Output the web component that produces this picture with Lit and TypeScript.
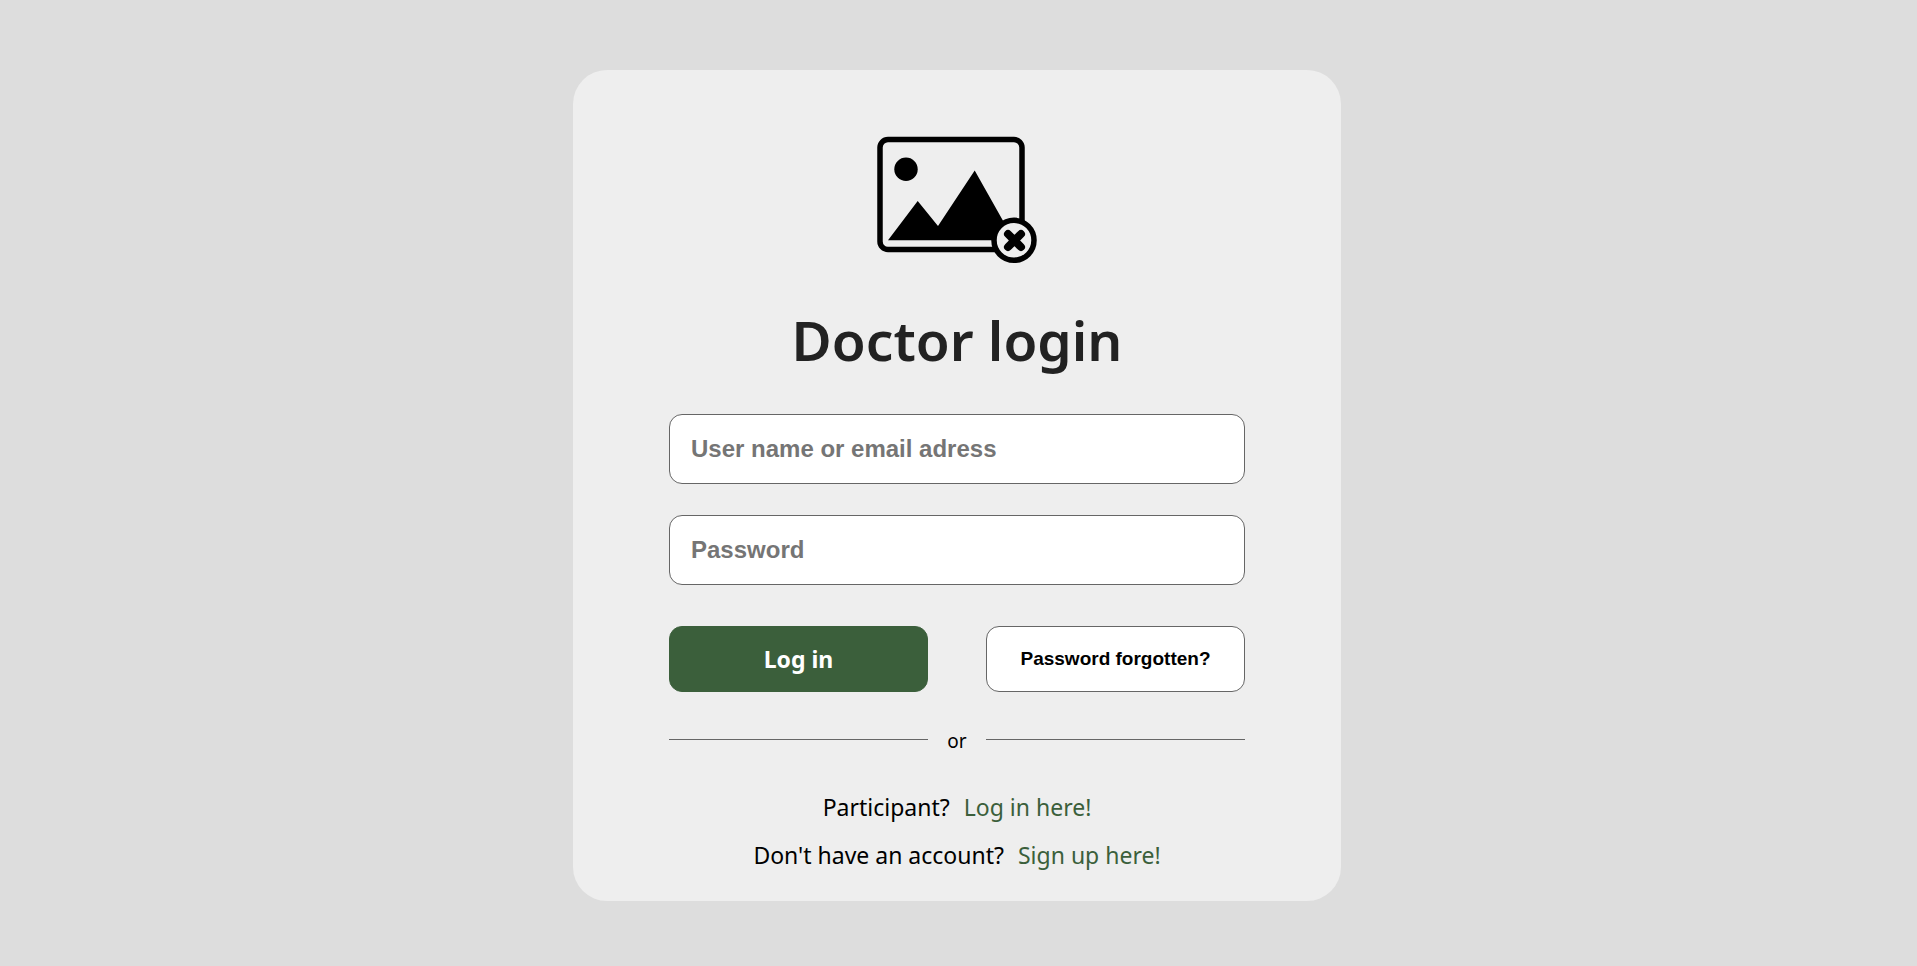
import { LitElement, html, css } from "lit";
import { customElement } from "lit/decorators.js";

@customElement("app-root")
export class AppRoot extends LitElement {
  static styles = css`
    :host {
      display: flex;
      justify-content: center;
      align-items: flex-start;
      box-sizing: border-box;
      min-height: 100vh;
      padding: 70px 3px 64px 0;
      background: #dddddd;
      color: #000;
      font-family: "Noto Sans", sans-serif;
    }
    .card {
      display: flex;
      flex-direction: column;
      box-sizing: border-box;
      width: 768px;
      max-width: 100%;
      padding: 66px 96px 22px;
      border-radius: 34px;
      background: #eeeeee;
    }
    .logo {
      align-self: center;
      width: 160px;
      height: 128px;
    }
    h1 {
      margin: 36px 0 34px;
      font-size: 55px;
      line-height: 80px;
      font-weight: 600;
      text-align: center;
      color: #222;
    }
    form {
      display: flex;
      flex-direction: column;
    }
    .field {
      box-sizing: border-box;
      width: 100%;
      height: 70px;
      margin: 0 0 31px;
      padding: 0 21px;
      border: 1px solid #666;
      border-radius: 13px;
      background: #fff;
      font: bold 24px "Liberation Sans", Arial, sans-serif;
    }
    .field::placeholder {
      color: #757575;
      opacity: 1;
    }
    .pair {
      display: grid;
      grid-template-columns: 1fr 1fr;
      column-gap: 58px;
      margin-top: 10px;
    }
    button {
      height: 66px;
      padding: 0;
      border: 1px solid #666;
      border-radius: 13px;
      background: #fff;
      color: #000;
      font: bold 19px "Liberation Sans", Arial, sans-serif;
      cursor: pointer;
    }
    .primary {
      border-color: #3b5f3b;
      background: #3b5f3b;
      color: #fff;
      font: bold 23px "Noto Sans", sans-serif;
    }
    .divider {
      display: grid;
      grid-template-columns: 1fr 58px 1fr;
      align-items: start;
      margin: 34px 0 27px;
      font-size: 19px;
      line-height: 30px;
      text-align: center;
    }
    .rule {
      height: 1px;
      margin-top: 13px;
      background: #666;
    }
    .line {
      display: flex;
      justify-content: center;
      gap: 14px;
      margin: 0;
      font-size: 23px;
      line-height: 48px;
    }
    a {
      color: #3b5f3b;
      text-decoration: none;
    }
  `;

  render() {
    return html`
      <main class="card">
        <svg class="logo" viewBox="0 0 160 128" role="img" aria-label="Logo">
          <rect x="3" y="3.5" width="142" height="110" rx="8" fill="none" stroke="#000" stroke-width="5.5" />
          <circle cx="29" cy="33.3" r="11.7" />
          <path d="M11 104.300 40.700 65 61 90 97.700 34.500 137 104.300Z" />
          <circle cx="137" cy="104.300" r="20" fill="#eee" stroke="#000" stroke-width="5.500" />
          <path d="M131 98 144 111M144 98 131 111" stroke="#000" stroke-width="8" stroke-linecap="round" />
        </svg>
        <h1>Doctor login</h1>
        <form @submit=${(e: Event) => e.preventDefault()}>
          <input class="field" type="text" name="user" autocomplete="username"
            aria-label="User name or email adress" placeholder="User name or email adress" />
          <input class="field" type="password" name="password" autocomplete="current-password"
            aria-label="Password" placeholder="Password" />
          <div class="pair">
            <button class="primary" type="submit">Log in</button>
            <button type="button">Password forgotten?</button>
          </div>
        </form>
        <div class="divider">
          <span class="rule"></span><span>or</span><span class="rule"></span>
        </div>
        <p class="line"><span>Participant?</span><a href="#login">Log in here!</a></p>
        <p class="line"><span>Don't have an account?</span><a href="#signup">Sign up here!</a></p>
      </main>
    `;
  }
}
